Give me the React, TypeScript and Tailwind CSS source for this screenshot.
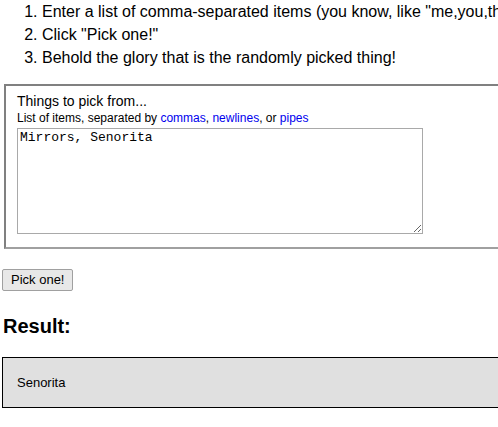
import React, { useState } from 'react';

const App: React.FC = () => {
  const [items, setItems] = useState('Mirrors, Senorita');
  const [result, setResult] = useState('Senorita');

  const pick = () => {
    const list = items.split(/[,|\n]/).map((s) => s.trim()).filter(Boolean);
    if (list.length) setResult(list[Math.floor(Math.random() * list.length)]);
  };

  return (
    <div className="w-[498px] h-[427px] overflow-hidden bg-white text-black font-['Liberation_Sans',Arial,sans-serif]">
      <div className="w-[620px] pl-[2px]">
        <ol className="list-decimal pl-[40px] text-[16px] leading-[23px] whitespace-nowrap">
          <li>Enter a list of comma-separated items (you know, like "me,you,them")</li>
          <li>Click "Pick one!"</li>
          <li>Behold the glory that is the randomly picked thing!</li>
        </ol>

        <div className="mt-[15px] ml-[2px] border-2 border-[#a0a0a0] border-t-[#808080] border-l-[#808080] px-[11px] pt-[7px] pb-[13px]">
          <div className="text-[14px] leading-[17px]">Things to pick from...</div>
          <div className="text-[12px] leading-[15px] mt-[1px]">
            List of items, separated by <a className="text-[#0000ee]" href="#">commas</a>,{' '}
            <a className="text-[#0000ee]" href="#">newlines</a>, or <a className="text-[#0000ee]" href="#">pipes</a>
          </div>
          <textarea
            value={items}
            onChange={(e) => setItems(e.target.value)}
            className="block mt-[2px] w-[406px] h-[106px] border border-[#a9a9a9] px-[2px] py-[1px] text-[13px] leading-[15px] font-['Liberation_Mono','Courier_New',monospace] outline-none resize"
          />
        </div>

        <button
          onClick={pick}
          className="mt-[20px] block h-[22px] px-[8px] bg-[#e8e8e8] border border-[#a0a0a0] rounded-[2px] text-[13px] leading-[18px]"
        >
          Pick one!
        </button>

        <h2 className="mt-[23px] ml-[1px] text-[20px] leading-[24px] font-bold">Result:</h2>

        <div className="mt-[19px] h-[51px] border border-black bg-[#e0e0e0] px-[14px] flex items-center text-[13px]">
          {result}
        </div>
      </div>
    </div>
  );
};

export default App;
